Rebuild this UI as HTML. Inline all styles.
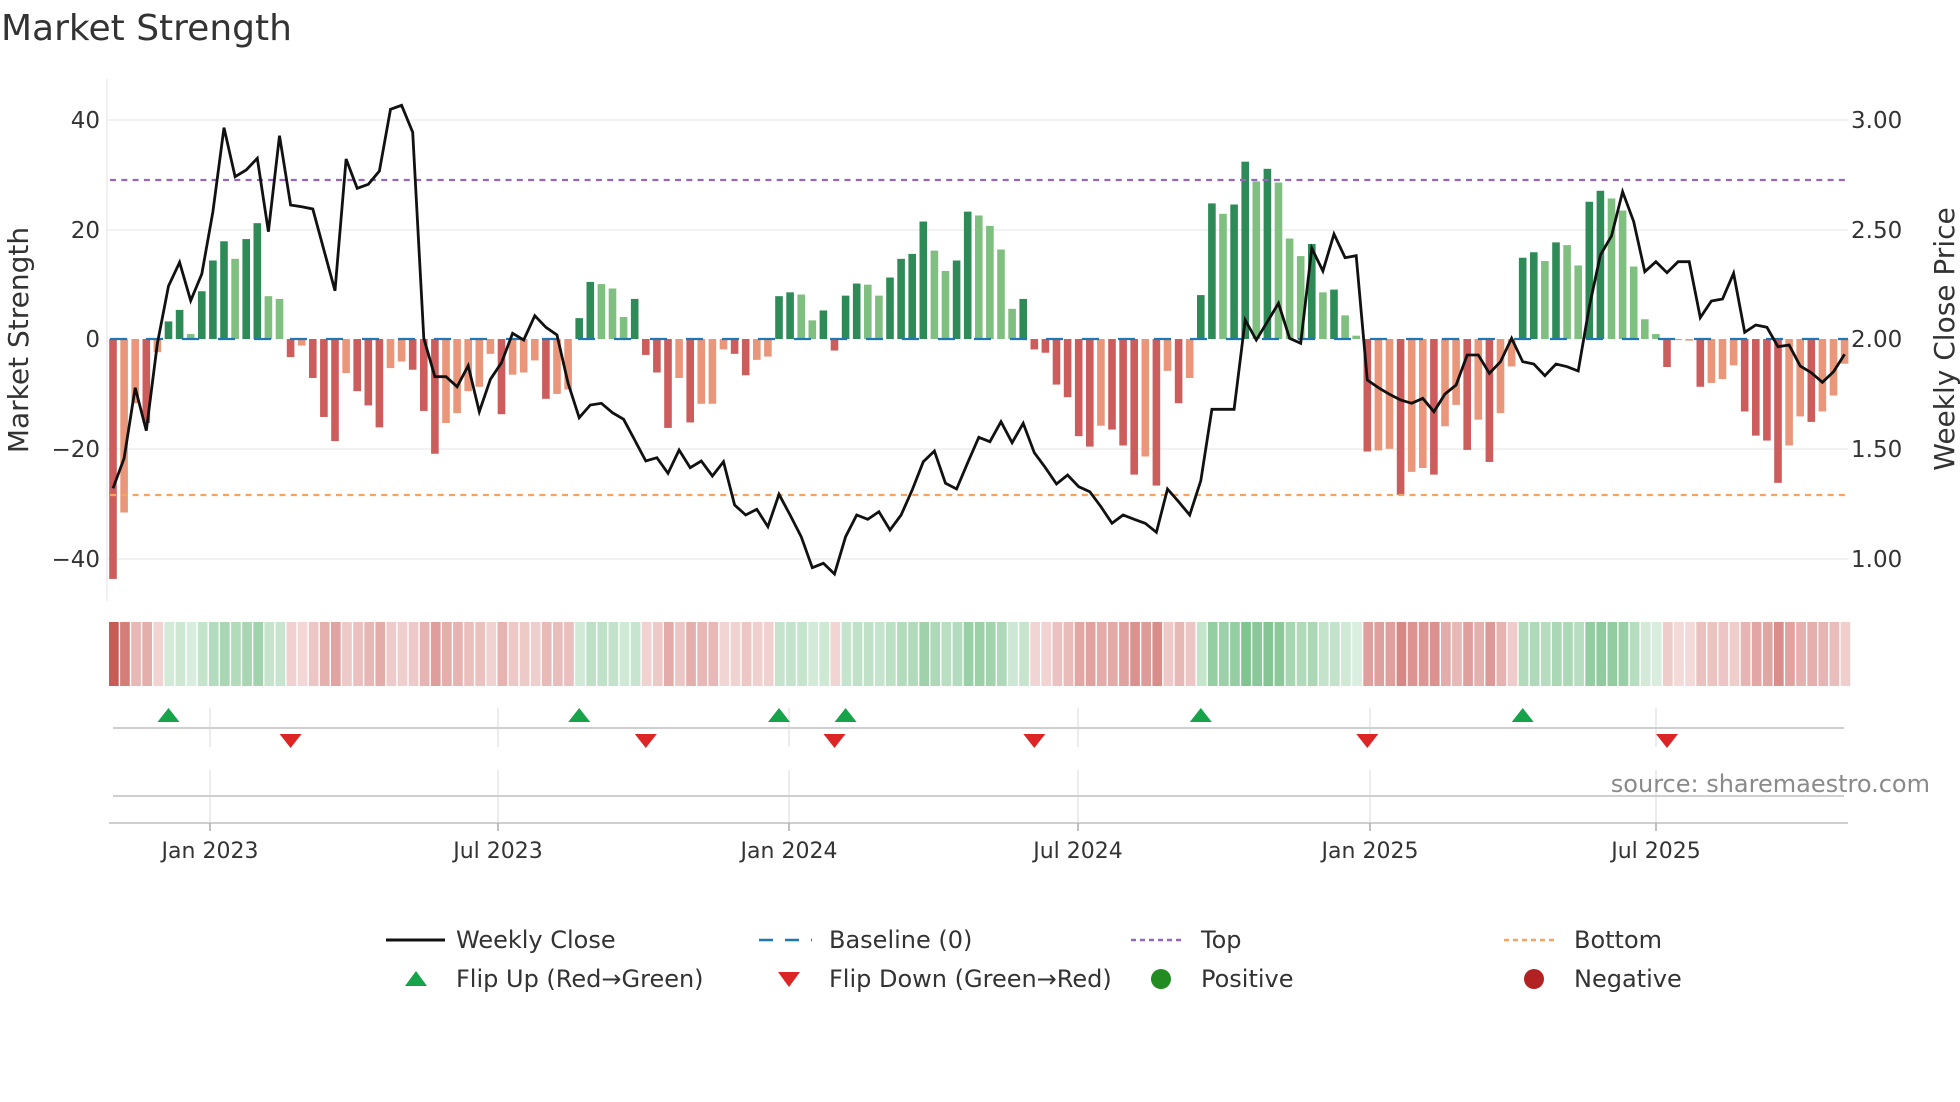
<!DOCTYPE html>
<html><head><meta charset="utf-8"><style>
html,body{margin:0;padding:0;background:#fff;}
svg{display:block;font-family:"DejaVu Sans","Liberation Sans",sans-serif;}
</style></head><body>
<svg id="c" width="1960" height="1102" viewBox="0 0 1960 1102" xmlns="http://www.w3.org/2000/svg">
<rect width="1960" height="1102" fill="#fff"/>
<text x="1" y="40" font-size="36" fill="#333">Market Strength</text>
<line x1="107" y1="79" x2="107" y2="601" stroke="#ececec" stroke-width="1.5"/>
<g stroke="#eeeeee" stroke-width="1.5">
<line x1="108" y1="120" x2="1848" y2="120"/><line x1="108" y1="230" x2="1848" y2="230"/>
<line x1="108" y1="449" x2="1848" y2="449"/><line x1="108" y1="559" x2="1848" y2="559"/>
</g>
<g font-size="23" fill="#333" text-anchor="end">
<text x="100" y="128">40</text><text x="100" y="238">20</text><text x="100" y="347">0</text>
<text x="100" y="457">−20</text><text x="100" y="567">−40</text>
</g>
<g font-size="23" fill="#333">
<text x="1851" y="128">3.00</text><text x="1851" y="238">2.50</text><text x="1851" y="347">2.00</text>
<text x="1851" y="457">1.50</text><text x="1851" y="567">1.00</text>
</g>
<text transform="translate(28,340) rotate(-90)" text-anchor="middle" font-size="28" fill="#333">Market Strength</text>
<text transform="translate(1954,339) rotate(-90)" text-anchor="middle" font-size="28" fill="#333">Weekly Close Price</text>
<g id="bars"></g>
<line x1="110" y1="339" x2="1848" y2="339" stroke="#1f77b4" stroke-width="2.2" stroke-dasharray="17,19"/>
<line x1="110" y1="180" x2="1848" y2="180" stroke="#9467bd" stroke-width="2.2" stroke-dasharray="6,5.3"/>
<line x1="110" y1="495" x2="1848" y2="495" stroke="#f4a460" stroke-width="2.2" stroke-dasharray="6,5.3"/>
<polyline id="price" fill="none" stroke="#111" stroke-width="2.8" stroke-linejoin="miter"/>
<g id="heat"></g>
<g stroke="#e6e6e6" stroke-width="1.5" id="vt"></g>
<line x1="113" y1="728" x2="1844" y2="728" stroke="#cfcfcf" stroke-width="2"/>
<line x1="113" y1="796" x2="1844" y2="796" stroke="#cfcfcf" stroke-width="2"/>
<line x1="109" y1="823" x2="1848" y2="823" stroke="#cfcfcf" stroke-width="2"/>
<g id="flips"></g>
<text x="1930" y="792" text-anchor="end" font-size="24" fill="#8a8a8a">source: sharemaestro.com</text>
<g id="ticks" font-size="22" fill="#333" text-anchor="middle"></g>
<g font-size="24" fill="#333">
<line x1="386" y1="940" x2="445" y2="940" stroke="#111" stroke-width="3"/>
<text x="456" y="948">Weekly Close</text>
<line x1="759" y1="940" x2="812" y2="940" stroke="#1f77b4" stroke-width="2.5" stroke-dasharray="14,12"/>
<text x="829" y="948">Baseline (0)</text>
<line x1="1131" y1="940" x2="1185" y2="940" stroke="#9467bd" stroke-width="2.5" stroke-dasharray="5,4"/>
<text x="1201" y="948">Top</text>
<line x1="1504" y1="940" x2="1558" y2="940" stroke="#f4a460" stroke-width="2.5" stroke-dasharray="5,4"/>
<text x="1574" y="948">Bottom</text>
<polygon points="405,986 427,986 416,971" fill="#16a34a"/>
<text x="456" y="987">Flip Up (Red→Green)</text>
<polygon points="778,972 800,972 789,987" fill="#dc2626"/>
<text x="829" y="987">Flip Down (Green→Red)</text>
<circle cx="1161" cy="979" r="10" fill="#228b22"/>
<text x="1201" y="987">Positive</text>
<circle cx="1534" cy="979" r="10" fill="#b22222"/>
<text x="1574" y="987">Negative</text>
</g>
</svg>
<script>
var s=[-43.7,-31.6,-11.7,-15.3,-2.4,3.2,5.3,0.9,8.7,14.3,17.8,14.6,18.2,21.1,7.8,7.3,-3.3,-1.2,-7.1,-14.2,-18.6,-6.2,-9.5,-12.1,-16.1,-5.3,-4.1,-5.6,-13.1,-20.9,-15.3,-13.5,-9.5,-8.7,-2.7,-13.7,-6.5,-6.1,-3.9,-10.9,-10,-9.2,3.8,10.4,10,9.2,4,7.3,-2.9,-6.1,-16.2,-7.1,-15.2,-11.8,-11.8,-1.9,-2.7,-6.6,-3.8,-3.2,7.8,8.5,8.1,3.4,5.2,-2.1,7.9,10.1,9.9,7.9,11.2,14.6,15.5,21.4,16.1,12.4,14.3,23.2,22.5,20.6,16.3,5.5,7.3,-1.9,-2.5,-8.3,-10.6,-17.7,-19.6,-15.8,-16.5,-19.4,-24.7,-21.4,-26.7,-5.8,-11.7,-7.1,8,24.7,22.8,24.5,32.3,28.7,31,28.5,18.3,15.1,17.3,8.5,9,4.3,0.6,-20.5,-20.3,-20,-28.4,-24.2,-23.5,-24.7,-15.9,-12,-20.2,-14.7,-22.4,-13.5,-5,14.8,15.8,14.2,17.6,17.1,13.4,25,27,25.6,23.4,13.2,3.6,0.9,-5.1,-0.2,-0.3,-8.7,-8,-7.3,-4.8,-13.2,-17.6,-18.5,-26.2,-19.4,-14.1,-15.1,-13.2,-10.3,-4.5];
var pz=[1195,1105,893,1022,760,588,517,632,552,365,113,260,240,205,425,137,345,350,357,480,602,207,295,283,243,58,46,127,745,860,860,890,827,965,868,818,730,750,677,712,735,880,983,945,940,968,988,1050,1113,1103,1150,1080,1133,1113,1158,1115,1245,1275,1258,1310,1213,1275,1340,1433,1420,1452,1340,1275,1288,1265,1320,1275,1200,1115,1083,1180,1197,1118,1042,1055,995,1058,1000,1088,1133,1182,1155,1190,1205,1250,1300,1275,1288,1300,1327,1197,1235,1275,1172,958,958,958,690,750,695,640,745,760,475,543,432,503,497,870,893,913,930,940,925,965,912,885,795,795,850,815,745,815,822,857,822,830,843,650,495,438,305,395,545,515,548,515,515,683,633,627,550,727,705,712,770,765,828,848,877,845,793];
var dk=[1,0,0,1,0,1,1,0,1,1,1,0,1,1,0,0,1,0,1,1,1,0,1,1,1,0,0,1,1,1,0,0,0,0,0,1,0,0,0,1,0,0,1,1,0,0,0,1,1,1,1,0,1,0,0,0,1,1,0,0,1,1,0,0,1,1,1,1,0,0,1,1,1,1,0,0,1,1,0,0,0,0,1,1,1,1,1,1,1,0,1,1,1,0,1,0,1,0,1,1,0,1,1,0,1,0,0,0,1,0,1,0,0,1,0,0,1,0,0,1,0,0,1,0,1,0,0,1,1,0,1,0,0,1,1,0,0,0,0,0,1,0,0,1,0,0,0,1,1,1,1,0,0,1,0,0,0];
var NS="http://www.w3.org/2000/svg";
function el(t,a,p){var e=document.createElementNS(NS,t);for(var k in a)e.setAttribute(k,a[k]);p.appendChild(e);return e;}
var bars=document.getElementById('bars'),heat=document.getElementById('heat'),fl=document.getElementById('flips');
var K=5.49,pts=[];
for(var i=0;i<s.length;i++){
 var cx=113+11.1*i,v=s[i],h=Math.abs(v)*K,y=v>=0?339-h:339;
 var col=v>=0?(dk[i]?'#2e8b57':'#7fbf7f'):(dk[i]?'#cd5c5c':'#e9967a');
 el('rect',{x:cx-3.8,y:y,width:7.6,height:Math.max(h,0.8),fill:col},bars);
 pts.push(cx.toFixed(1)+','+(90+pz[i]/3).toFixed(1));
 var a=Math.min(1,0.22+0.78*Math.abs(v)/44);
 var c=v>=0?[95,180,115]:[200,90,85];
 var r=Math.round(255-(255-c[0])*a),g=Math.round(255-(255-c[1])*a),b=Math.round(255-(255-c[2])*a);
 el('rect',{x:109+11.1*i,y:622,width:9.7,height:64,fill:'rgb('+r+','+g+','+b+')'},heat);
 if(i>0){
  if(s[i-1]<0&&v>=0) el('polygon',{points:(cx-11)+',722 '+(cx+11)+',722 '+cx+',708',fill:'#16a34a'},fl);
  if(s[i-1]>=0&&v<0) el('polygon',{points:(cx-11)+',734 '+(cx+11)+',734 '+cx+',748',fill:'#dc2626'},fl);
 }
}
document.getElementById('price').setAttribute('points',pts.join(' '));
var tk=[[210,'Jan 2023'],[498,'Jul 2023'],[789,'Jan 2024'],[1078,'Jul 2024'],[1370,'Jan 2025'],[1656,'Jul 2025']];
var vt=document.getElementById('vt'),tg=document.getElementById('ticks');
tk.forEach(function(t){
 el('line',{x1:t[0],y1:708,x2:t[0],y2:747},vt);
 el('line',{x1:t[0],y1:770,x2:t[0],y2:823},vt);
 el('line',{x1:t[0],y1:823,x2:t[0],y2:831,stroke:'#aaa','stroke-width':1.5},tg);
 var e=el('text',{x:t[0],y:858},tg);e.textContent=t[1];
});
</script>
</body></html>
